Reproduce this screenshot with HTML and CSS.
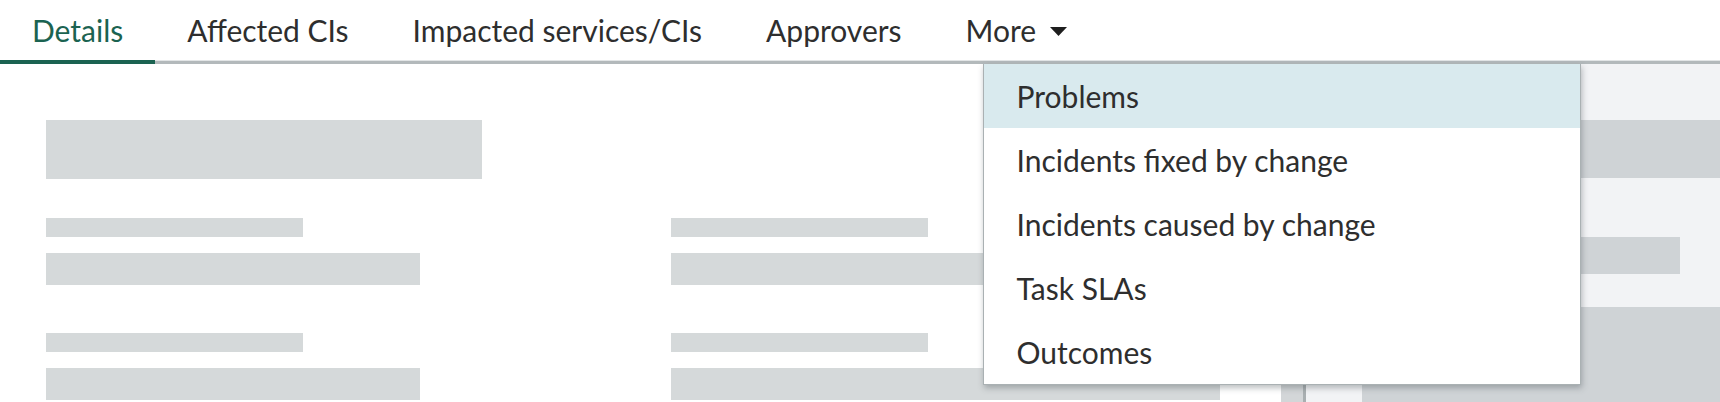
FILE: index.html
```html
<!DOCTYPE html>
<html lang="en">
<head>
<meta charset="utf-8">
<title>Change request</title>
<link rel="stylesheet" href="styles.css">
</head>
<body>
<nav class="tabs">
  <div class="tab active">Details</div>
  <div class="tab">Affected CIs</div>
  <div class="tab">Impacted services/CIs</div>
  <div class="tab">Approvers</div>
  <div class="tab more">More
    <svg class="caret" width="17" height="9" viewBox="0 0 17 9" aria-hidden="true"><path d="M0 0H17L8.5 9Z" fill="#1e1e1e"/></svg>
    <ul class="menu">
      <li class="item hover">Problems</li>
      <li class="item">Incidents fixed by change</li>
      <li class="item">Incidents caused by change</li>
      <li class="item">Task SLAs</li>
      <li class="item">Outcomes</li>
    </ul>
  </div>
</nav>
<div class="page">
  <main class="main">
    <div class="skel title"></div>
    <div class="fields">
      <div class="col">
        <div class="field"><div class="skel label"></div><div class="skel value"></div></div>
        <div class="field"><div class="skel label"></div><div class="skel value"></div></div>
      </div>
      <div class="col col-wide">
        <div class="field"><div class="skel label"></div><div class="skel value"></div></div>
        <div class="field"><div class="skel label"></div><div class="skel value"></div></div>
      </div>
    </div>
  </main>
  <div class="splitter"></div>
  <aside class="sidebar">
    <div class="sblock first"></div>
    <div class="sbar"></div>
    <div class="sblock last"></div>
  </aside>
</div>
</body>
</html>
```
FILE: styles.css
```css
html, body {
  margin: 0;
  padding: 0;
  background: #ffffff;
  height: 402px;
  overflow: hidden;
}
body {
  font-family: "Lato", "Open Sans", "Liberation Sans", sans-serif;
  color: #2e2e2e;
}
.tabs {
  display: flex;
  height: 64px;
  box-shadow: inset 0 -3px 0 #b3b9bb, inset 0 -4px 0 #e2e5e6;
  position: relative;
  z-index: 2;
}
.tab {
  height: 60px;
  line-height: 60px;
  padding: 0 32px 4px 32px;
  font-size: 30px;
  color: #2e2e2e;
  white-space: nowrap;
  position: relative;
}
.tab.active {
  color: #1b6351;
  box-shadow: inset 0 -4px 0 #1b6351;
}
.tab.more {
  display: flex;
  align-items: center;
  align-self: flex-start;
  height: 60px;
}
.caret {
  margin-left: 14px;
  margin-top: 2px;
}
.menu {
  position: absolute;
  top: 64px;
  left: 49px;
  width: 596px;
  margin: 0;
  padding: 0;
  list-style: none;
  background: #ffffff;
  border: 1px solid #aab1b3;
  border-top: none;
  box-shadow: 1px 3px 6px rgba(60, 70, 75, 0.35);
}
.item {
  height: 64px;
  line-height: 64px;
  padding-left: 33px;
  font-size: 30px;
  color: #2e2e2e;
}
.item.hover {
  background: #d9eaee;
}
.page {
  display: flex;
  height: 338px;
}
.main {
  width: 1235px;
  padding: 56px 0 0 46px;
  flex: none;
}
.skel {
  background: #d5d9da;
}
.title {
  width: 436px;
  height: 59px;
}
.fields {
  display: flex;
  gap: 251px;
  margin-top: 39px;
}
.col {
  display: flex;
  flex-direction: column;
  gap: 48px;
}
.field {
  display: flex;
  flex-direction: column;
  gap: 16px;
}
.label {
  width: 257px;
  height: 19px;
}
.value {
  width: 374px;
  height: 32px;
}
.col-wide .value {
  width: 549px;
}
.splitter {
  width: 22px;
  flex: none;
  background: #d3d6d8;
  border-right: 3px solid #a9afb1;
}
.sidebar {
  flex: 1;
  background: #f2f3f5;
  padding-left: 56px;
  display: flex;
  flex-direction: column;
}
.sblock {
  background: #cfd3d6;
}
.sblock.first {
  margin-top: 56px;
  height: 58px;
}
.sbar {
  margin-top: 59px;
  margin-right: 40px;
  height: 37px;
  background: #cfd3d6;
}
.sblock.last {
  margin-top: 33px;
  flex: 1;
}
```
